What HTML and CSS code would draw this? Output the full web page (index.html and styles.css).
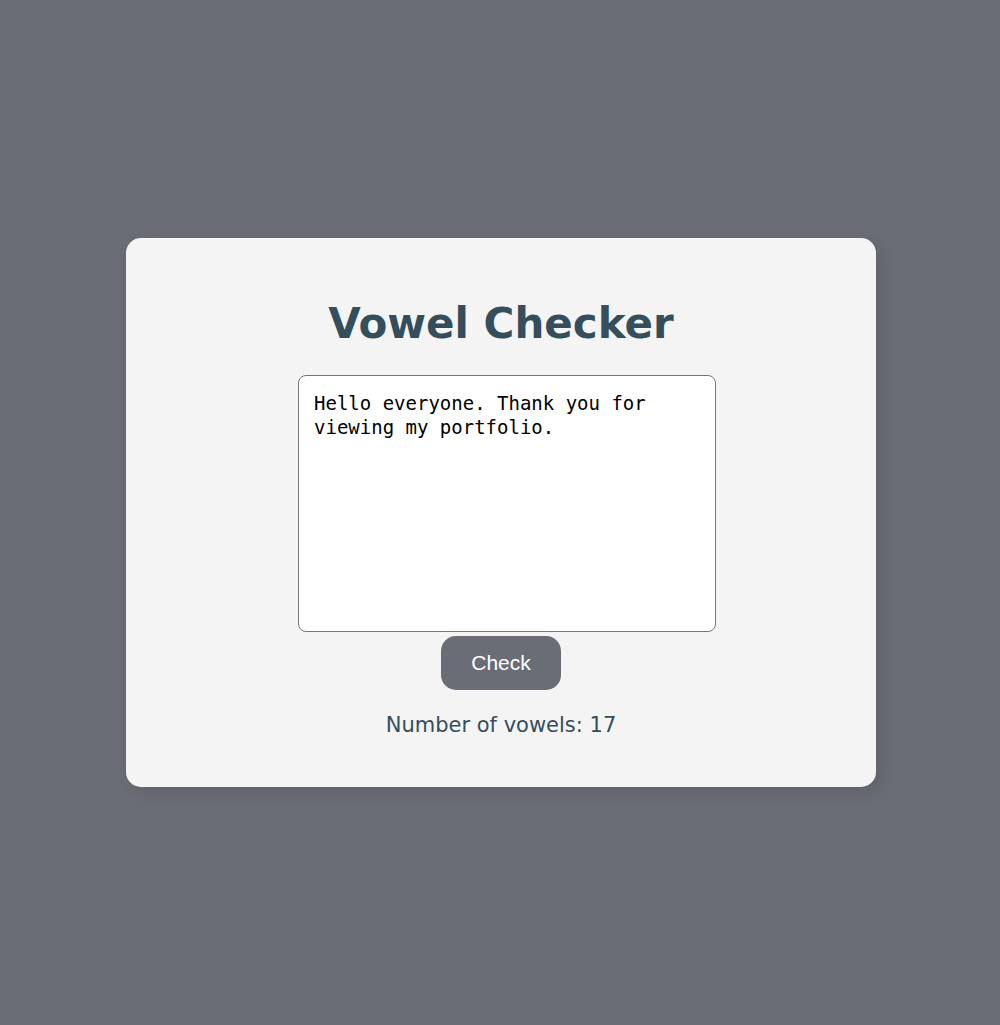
FILE: index.html
```html
<!DOCTYPE html>
<html lang="en">
<head>
<meta charset="utf-8">
<meta name="viewport" content="width=device-width, initial-scale=1">
<title>Vowel Checker</title>
<link rel="stylesheet" href="styles.css">
</head>
<body>
<main class="card">
  <h1 class="title">Vowel Checker</h1>
  <textarea class="text-input" aria-label="Text to check" spellcheck="false">Hello everyone. Thank you for viewing my portfolio.</textarea>
  <button class="check-button" type="button">Check</button>
  <p class="result">Number of vowels: 17</p>
</main>
</body>
</html>
```

FILE: styles.css
```css
* {
  box-sizing: border-box;
}

body {
  margin: 0;
  min-height: 100vh;
  display: flex;
  align-items: center;
  justify-content: center;
  background: #6b6d76;
  font-family: Verdana, "DejaVu Sans", sans-serif;
  color: #344e5c;
}

.card {
  width: 75%;
  margin-left: 2px;
  padding: 61px 30px 49px;
  display: flex;
  flex-direction: column;
  align-items: center;
  background: #f4f4f4;
  border-radius: 15px;
  box-shadow: 5px 5px 15px rgba(0, 0, 0, 0.1);
}

.title {
  margin: 0 0 26px;
  font-size: 42px;
  line-height: 50px;
}

.text-input {
  width: 418px;
  max-width: 100%;
  height: 257px;
  margin: 0 0 4px 12px;
  padding: 15px;
  border: 1px solid #767676;
  border-radius: 8px;
  background: #fff;
  color: #000;
  font-family: Consolas, "DejaVu Sans Mono", monospace;
  font-size: 19px;
  line-height: 24px;
  resize: none;
}

.check-button {
  padding: 15px 30px;
  border: 0;
  border-radius: 15px;
  background: #6b6d76;
  color: #fff;
  font-family: Arial, "Liberation Sans", sans-serif;
  font-size: 21px;
  line-height: 24px;
}

.result {
  margin: 22px 0 0;
  font-size: 21px;
  line-height: 26px;
}
```
